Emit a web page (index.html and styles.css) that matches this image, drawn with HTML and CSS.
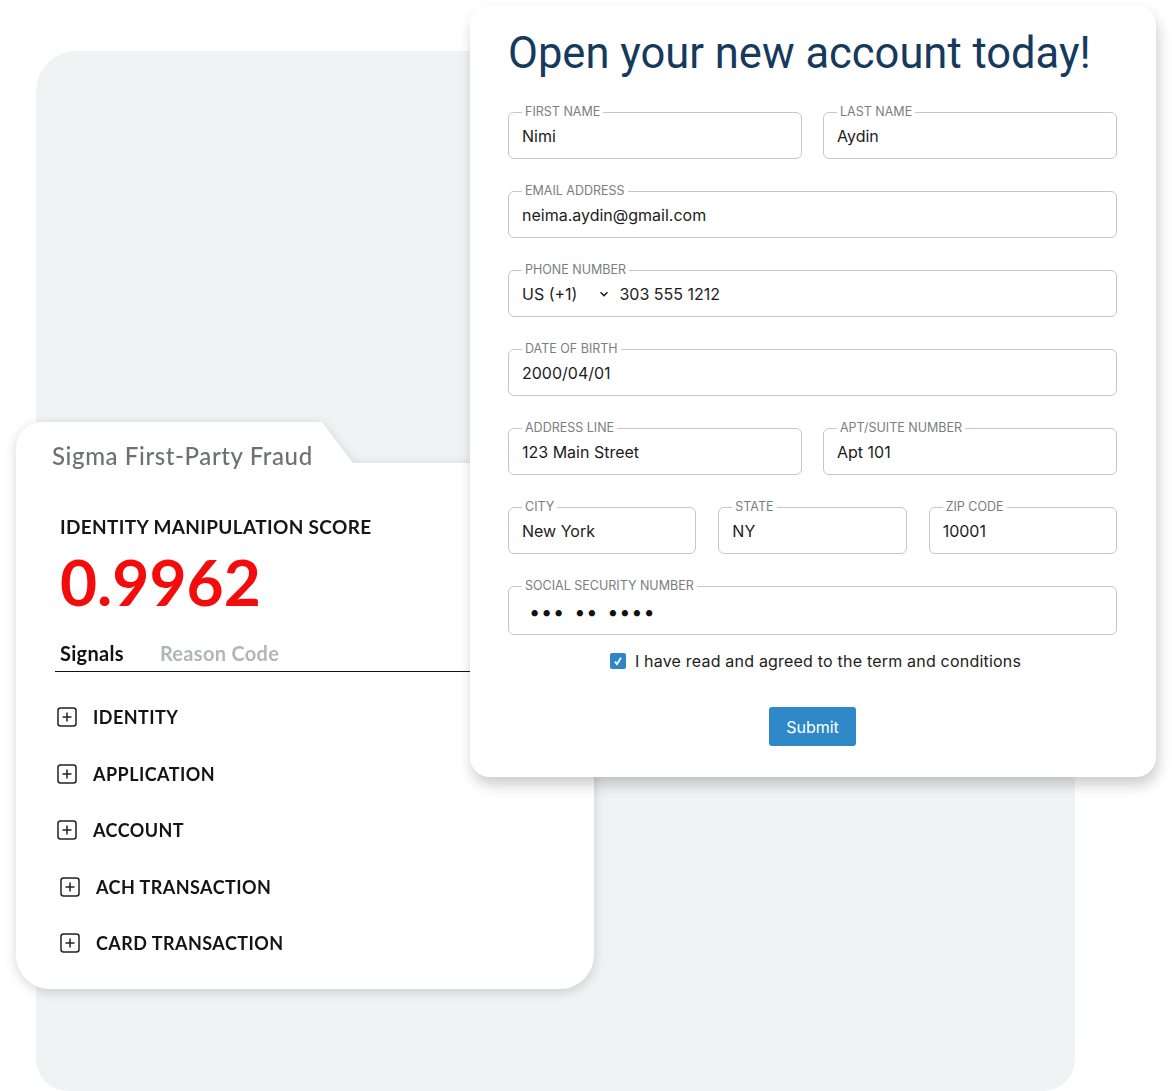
FILE: index.html
```html
<!DOCTYPE html>
<html lang="en">
<head>
    <meta charset="UTF-8">
    <meta name="viewport" content="width=device-width, initial-scale=1.0">
    <title>Open your new account</title>
    <link rel="stylesheet" href="styles.css">
</head>
<body>
    <div class="stage">
        <div class="backdrop"></div>

        <section class="fraud-card">
            <div class="fraud-head">
                <h2 class="fraud-title">Sigma First-Party Fraud</h2>
                <span class="fraud-slope"></span>
            </div>
            <div class="fraud-body">
                <h3 class="score-label">IDENTITY MANIPULATION SCORE</h3>
                <div class="score">0.9962</div>
                <div class="tabs">
                    <span class="tab active">Signals</span>
                    <span class="tab">Reason Code</span>
                </div>
                <ul class="signals">
                    <li><svg class="plus" viewBox="0 0 20 20"><rect x="1" y="1" width="18" height="18" rx="2.5"/><path d="M10 5.5v9M5.5 10h9"/></svg>IDENTITY</li>
                    <li><svg class="plus" viewBox="0 0 20 20"><rect x="1" y="1" width="18" height="18" rx="2.5"/><path d="M10 5.5v9M5.5 10h9"/></svg>APPLICATION</li>
                    <li><svg class="plus" viewBox="0 0 20 20"><rect x="1" y="1" width="18" height="18" rx="2.5"/><path d="M10 5.5v9M5.5 10h9"/></svg>ACCOUNT</li>
                    <li class="shifted"><svg class="plus" viewBox="0 0 20 20"><rect x="1" y="1" width="18" height="18" rx="2.5"/><path d="M10 5.5v9M5.5 10h9"/></svg>ACH TRANSACTION</li>
                    <li class="shifted"><svg class="plus" viewBox="0 0 20 20"><rect x="1" y="1" width="18" height="18" rx="2.5"/><path d="M10 5.5v9M5.5 10h9"/></svg>CARD TRANSACTION</li>
                </ul>
            </div>
        </section>

        <form class="signup">
            <h1 class="signup-title">Open your new account today!</h1>

            <div class="fields">
                <div class="row">
                    <fieldset class="field"><legend>FIRST NAME</legend><span class="value">Nimi</span></fieldset>
                    <fieldset class="field"><legend>LAST NAME</legend><span class="value">Aydin</span></fieldset>
                </div>
                <fieldset class="field"><legend>EMAIL ADDRESS</legend><span class="value">neima.aydin@gmail.com</span></fieldset>
                <fieldset class="field">
                    <legend>PHONE NUMBER</legend>
                    <span class="value phone">
                        US (+1)
                        <svg class="chevron" viewBox="0 0 10 6"><path d="M1.5 1.2 5 4.6 8.5 1.2"/></svg>
                        303 555 1212
                    </span>
                </fieldset>
                <fieldset class="field"><legend>DATE OF BIRTH</legend><span class="value">2000/04/01</span></fieldset>
                <div class="row">
                    <fieldset class="field"><legend>ADDRESS LINE</legend><span class="value">123 Main Street</span></fieldset>
                    <fieldset class="field"><legend>APT/SUITE NUMBER</legend><span class="value">Apt 101</span></fieldset>
                </div>
                <div class="row three">
                    <fieldset class="field"><legend>CITY</legend><span class="value">New York</span></fieldset>
                    <fieldset class="field"><legend>STATE</legend><span class="value">NY</span></fieldset>
                    <fieldset class="field"><legend>ZIP CODE</legend><span class="value">10001</span></fieldset>
                </div>
                <fieldset class="field">
                    <legend>SOCIAL SECURITY NUMBER</legend>
                    <span class="value dots"><span>•••</span><span>••</span><span>••••</span></span>
                </fieldset>
            </div>

            <label class="agree">
                <span class="check"><svg viewBox="0 0 16 16"><path d="M5 8.6 7 11.2 11 4.6"/></svg></span>
                I have read and agreed to the term and conditions
            </label>

            <div class="actions">
                <button type="button" class="submit">Submit</button>
            </div>
        </form>
    </div>
</body>
</html>
```

FILE: styles.css
```css
body {
    margin: 0;
    background-color: #fff;
    font-family: Inter, "Noto Sans", sans-serif;
}

.stage {
    position: relative;
    width: 1172px;
    height: 1091px;
    overflow: hidden;
}

.backdrop {
    margin: 51px 97px 0 36px;
    height: 1040px;
    background-color: #f0f3f4;
    border-radius: 40px 40px 32px 32px;
}

/* left card */
.fraud-card {
    position: absolute;
    left: 16px;
    top: 422px;
    width: 578px;
    filter: drop-shadow(0 3px 6px rgba(0, 0, 0, 0.16));
    font-family: Lato, "Noto Sans", sans-serif;
}

.fraud-head {
    display: flex;
    height: 41px;
}

.fraud-title {
    width: 304px;
    height: 41px;
    box-sizing: border-box;
    margin: 0;
    padding: 21px 0 0 36px;
    background-color: #fff;
    border-top-left-radius: 26px;
    font-size: 24px;
    line-height: 26px;
    font-weight: 500;
    letter-spacing: 0.6px;
    color: #6c7176;
    white-space: nowrap;
}

.fraud-slope {
    width: 33px;
    height: 41px;
    background-color: #fff;
    clip-path: polygon(0 0, 6% 0, 100% 100%, 0 100%);
}

.fraud-body {
    background-color: #fff;
    border-radius: 0 0 34px 34px;
    padding: 53px 0 17px 44px;
}

.score-label {
    margin: 0;
    font-size: 19px;
    line-height: 22px;
    font-weight: 700;
    color: #161616;
    letter-spacing: 0.35px;
}

.score {
    margin-top: 12px;
    font-size: 64px;
    line-height: 64px;
    font-weight: 700;
    color: #f40c0c;
}

.tabs {
    display: flex;
    gap: 36px;
    margin: 28px 0 0 -5px;
    padding: 0 0 7px 5px;
    border-bottom: 1.5px solid #111;
}

.tab {
    font-size: 20px;
    line-height: 22px;
    font-weight: 700;
    letter-spacing: 0.3px;
    color: #b2b6b9;
}

.tab.active {
    color: #111;
}

.signals {
    list-style: none;
    margin: 17px 0 0;
    padding: 0;
}

.signals li {
    display: flex;
    align-items: center;
    gap: 16px;
    height: 56.5px;
    margin-left: -3px;
    font-size: 18px;
    font-weight: 700;
    letter-spacing: 0.45px;
    color: #141414;
}

.signals li.shifted {
    margin-left: 0;
}

.plus {
    width: 20px;
    height: 20px;
    fill: none;
    stroke: #222;
    stroke-width: 1.5;
}

/* signup form */
.signup {
    position: absolute;
    left: 470px;
    top: 5px;
    width: 686px;
    box-sizing: border-box;
    padding: 25px 39px 31px 38px;
    background-color: #fff;
    border-radius: 20px;
    box-shadow: 2px 8px 14px rgba(0, 0, 0, 0.2);
}

.signup-title {
    margin: 0 0 27px;
    font-family: Roboto, sans-serif;
    font-size: 43.5px;
    line-height: 48px;
    font-weight: 400;
    color: #163a5e;
}

.fields {
    display: flex;
    flex-direction: column;
    gap: 25px;
}

.row {
    display: grid;
    grid-template-columns: 1fr 1fr;
    gap: 21px;
}

.row.three {
    grid-template-columns: 1fr 1fr 1fr;
    gap: 22px;
}

.field {
    margin: 0;
    min-width: 0;
    padding: 7px 13px 12px;
    border: 1px solid #c4c8cb;
    border-radius: 6px;
}

.field legend {
    padding: 0 3px;
    font-size: 12.5px;
    line-height: 14px;
    color: #7a7e82;
}

.value {
    display: block;
    font-size: 16px;
    line-height: 20px;
    color: #1c1c1c;
}

.phone {
    display: flex;
    align-items: center;
}

.chevron {
    width: 10px;
    height: 6px;
    margin: 0 10px 0 22px;
    fill: none;
    stroke: #222;
    stroke-width: 1.5;
}

.dots {
    display: flex;
    gap: 9px;
    padding: 2px 0 0 7px;
    font-size: 20px;
    letter-spacing: 0.8px;
    color: #111;
}

.agree {
    display: flex;
    align-items: center;
    justify-content: center;
    gap: 9px;
    margin-top: 16px;
    padding-left: 6px;
    font-size: 16px;
    line-height: 20px;
    letter-spacing: 0.2px;
    color: #222;
}

.check {
    display: flex;
    width: 16px;
    height: 16px;
    background-color: #2f86c6;
    border-radius: 2px;
}

.check svg {
    width: 16px;
    height: 16px;
    fill: none;
    stroke: #fff;
    stroke-width: 1.8;
}

.actions {
    display: flex;
    justify-content: center;
    margin-top: 36px;
}

.submit {
    height: 39px;
    padding: 0 17px;
    border: none;
    border-radius: 3px;
    background-color: #2f89c9;
    color: #fff;
    font-family: Inter, sans-serif;
    font-size: 16px;
    cursor: pointer;
}
```
